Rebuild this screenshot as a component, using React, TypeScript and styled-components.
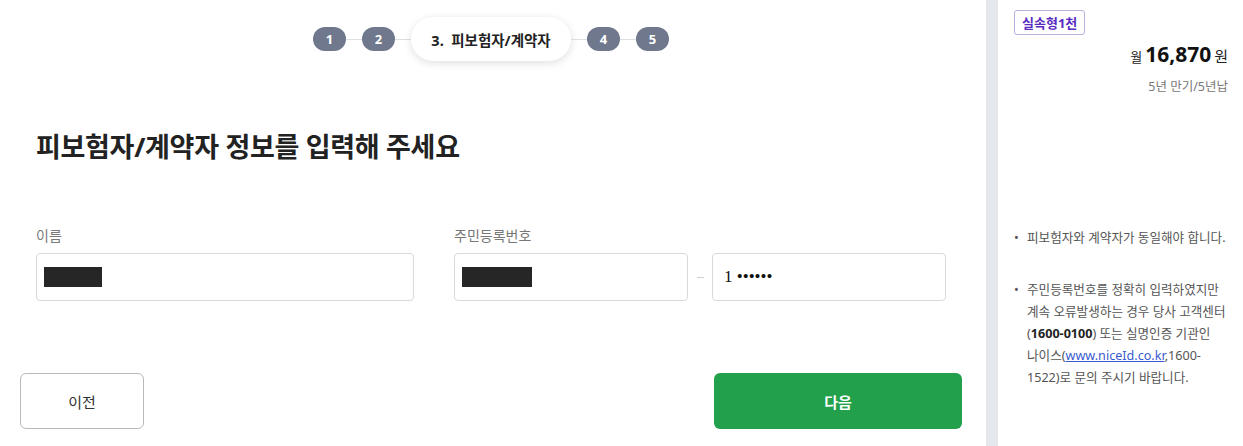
import React from 'react';
import styled, { createGlobalStyle } from 'styled-components';

const GlobalStyle = createGlobalStyle`
  html, body {
    margin: 0;
    padding: 0;
    background: #ffffff;
  }
  body {
    font-family: "Noto Sans", "Noto Sans CJK KR", sans-serif;
    color: #222222;
  }
  * {
    box-sizing: border-box;
  }
`;

const steps = [
  { no: 1 },
  { no: 2 },
  { no: 3, label: '피보험자/계약자' },
  { no: 4 },
  { no: 5 },
];

const App = () => {
  return (
    <>
      <GlobalStyle />
      <Page>
        <Main>
          <Stepper>
            {steps.map((step, i) => (
              <React.Fragment key={step.no}>
                {i > 0 && <Connector />}
                {step.label ? (
                  <ActiveStep>
                    {step.no}.&nbsp; {step.label}
                  </ActiveStep>
                ) : (
                  <StepDot>{step.no}</StepDot>
                )}
              </React.Fragment>
            ))}
          </Stepper>

          <Title>피보험자/계약자 정보를 입력해 주세요</Title>

          <Fields>
            <Field>
              <Label>이름</Label>
              <InputBox>
                <Masked $width={58} />
              </InputBox>
            </Field>
            <Field>
              <Label>주민등록번호</Label>
              <IdRow>
                <InputBox>
                  <Masked $width={70} />
                </InputBox>
                <Dash />
                <InputBox>
                  <IdBack>1 ••••••</IdBack>
                </InputBox>
              </IdRow>
            </Field>
          </Fields>

          <Actions>
            <PrevButton>이전</PrevButton>
            <NextButton>다음</NextButton>
          </Actions>
        </Main>

        <Divider />

        <Side>
          <Badge>실속형1천</Badge>
          <Price>
            <PriceUnit>월</PriceUnit>
            <PriceValue>16,870</PriceValue>
            <PriceWon>원</PriceWon>
          </Price>
          <Term>5년 만기/5년납</Term>

          <Notes>
            <Note>피보험자와 계약자가 동일해야 합니다.</Note>
            <Note>
              주민등록번호를 정확히 입력하였지만 계속 오류발생하는 경우 당사 고객센터 (
              <strong>1600-0100</strong>) 또는 실명인증 기관인 나이스(
              <NoteLink href="#">www.niceId.co.kr</NoteLink>,1600-1522)로 문의 주시기
              바랍니다.
            </Note>
          </Notes>
        </Side>
      </Page>
    </>
  );
};

export default App;

const Page = styled.div`
  display: flex;
  width: 1243px;
  height: 446px;
  overflow: hidden;
  background: #ffffff;
`;

const Main = styled.main`
  width: 986px;
  flex-shrink: 0;
  display: flex;
  flex-direction: column;
  padding-top: 17px;
`;

const Stepper = styled.div`
  display: flex;
  align-items: center;
  justify-content: center;
  height: 44px;
  padding-right: 4px;
`;

const Connector = styled.span`
  width: 16px;
  height: 1px;
  background: #dcdfe4;
`;

const StepDot = styled.span`
  display: flex;
  align-items: center;
  justify-content: center;
  width: 33px;
  height: 24px;
  border-radius: 12px;
  background: #6f788c;
  color: #ffffff;
  font-size: 13px;
  font-weight: 700;
`;

const ActiveStep = styled.span`
  display: flex;
  align-items: center;
  justify-content: center;
  width: 160px;
  height: 44px;
  border-radius: 22px;
  background: #ffffff;
  box-shadow: 0 2px 8px rgba(0, 0, 0, 0.13);
  font-size: 14.5px;
  font-weight: 700;
  color: #222222;
  white-space: pre;
`;

const Title = styled.h1`
  margin: 68px 0 0 36px;
  font-size: 27px;
  line-height: 36px;
  font-weight: 700;
  letter-spacing: -0.3px;
  color: #222222;
`;

const Fields = styled.div`
  display: grid;
  grid-template-columns: 378px 492px;
  column-gap: 40px;
  margin: 61px 0 0 36px;
`;

const Field = styled.div`
  display: flex;
  flex-direction: column;
`;

const Label = styled.label`
  font-size: 14px;
  line-height: 20px;
  color: #777777;
  margin-bottom: 7px;
`;

const IdRow = styled.div`
  display: grid;
  grid-template-columns: 234px 24px 234px;
  align-items: center;
`;

const InputBox = styled.div`
  height: 48px;
  border: 1px solid #dadada;
  border-radius: 4px;
  display: flex;
  align-items: center;
  padding: 0 7px;
  background: #ffffff;
`;

const Masked = styled.span<{ $width: number }>`
  width: ${(p) => p.$width}px;
  height: 20px;
  background: #262626;
`;

const Dash = styled.span`
  justify-self: center;
  width: 7px;
  height: 1px;
  background: #cfcfcf;
`;

const IdBack = styled.span`
  padding-left: 4px;
  font-family: "Liberation Serif", serif;
  font-size: 17px;
  color: #111111;
`;

const Actions = styled.div`
  display: flex;
  justify-content: space-between;
  margin: 72px 24px 0 20px;
`;

const BaseButton = styled.button`
  height: 56px;
  border-radius: 6px;
  font-family: "Noto Sans", "Noto Sans CJK KR", sans-serif;
  font-size: 15px;
  cursor: pointer;
`;

const PrevButton = styled(BaseButton)`
  width: 124px;
  background: #ffffff;
  border: 1px solid #b9b9b9;
  color: #333333;
`;

const NextButton = styled(BaseButton)`
  width: 248px;
  background: #22a04b;
  border: none;
  color: #ffffff;
  font-weight: 700;
`;

const Divider = styled.div`
  width: 12px;
  flex-shrink: 0;
  background: #e4e8ed;
`;

const Side = styled.aside`
  flex: 1;
  display: flex;
  flex-direction: column;
  align-items: flex-end;
  padding: 10px 15px 0 16px;
`;

const Badge = styled.span`
  align-self: flex-start;
  height: 25px;
  padding: 0 7px;
  display: flex;
  align-items: center;
  border: 1px solid #b9b0dd;
  border-radius: 3px;
  color: #5a2bc2;
  font-size: 13px;
  font-weight: 700;
`;

const Price = styled.div`
  display: flex;
  align-items: baseline;
  gap: 3px;
  margin-top: 5px;
  height: 32px;
`;

const PriceUnit = styled.span`
  font-size: 13px;
  color: #222222;
`;

const PriceValue = styled.span`
  font-size: 21px;
  font-weight: 700;
  color: #111111;
`;

const PriceWon = styled.span`
  font-size: 15px;
  color: #222222;
`;

const Term = styled.div`
  font-size: 12.5px;
  line-height: 20px;
  color: #777777;
  margin-top: 5px;
`;

const Notes = styled.ul`
  align-self: stretch;
  list-style: none;
  margin: 130px 0 0 0;
  padding: 0;
  display: flex;
  flex-direction: column;
  gap: 30px;
`;

const Note = styled.li`
  position: relative;
  padding-left: 13px;
  font-size: 12.6px;
  line-height: 22px;
  color: #555555;
  word-break: keep-all;

  &::before {
    content: '•';
    position: absolute;
    left: 0;
    top: 0;
    color: #555555;
  }

  strong {
    color: #222222;
    font-weight: 700;
  }
`;

const NoteLink = styled.a`
  color: #3a5bd0;
  text-decoration: underline;
`;
